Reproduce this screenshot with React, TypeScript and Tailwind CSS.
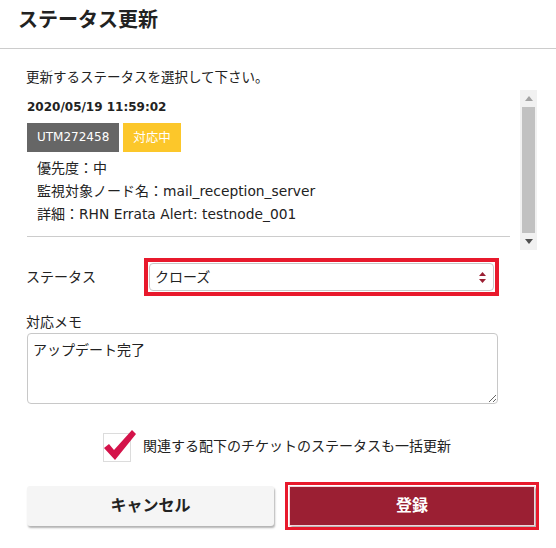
import React from "react";

function Scrollbar() {
  return (
    <div className="w-[17px] h-[160px] bg-[#f1f1f1] flex flex-col items-center shrink-0">
      <div className="h-[17px] w-full flex items-center justify-center">
        <svg width="8" height="5" viewBox="0 0 8 5">
          <polygon points="0,5 8,5 4,0" fill="#a3a3a3" />
        </svg>
      </div>
      <div className="w-[13px] h-[126px] bg-[#c1c1c1]" />
      <div className="h-[17px] w-full flex items-center justify-center">
        <svg width="8" height="5" viewBox="0 0 8 5">
          <polygon points="0,0 8,0 4,5" fill="#505050" />
        </svg>
      </div>
    </div>
  );
}

function CheckIcon() {
  return (
    <svg width="34" height="34" viewBox="0 0 34 34" className="shrink-0">
      <rect x="1.5" y="4.5" width="27" height="28" fill="#fff" stroke="#dcdcdc" strokeWidth="1" />
      <polygon points="2,19 7,15 12,21 30,1 34,5 13,31" fill="#d4134a" />
    </svg>
  );
}

export default function App() {
  return (
    <div className="w-[556px] h-[548px] bg-white text-[#222] overflow-hidden font-[family-name:DejaVu_Sans,Noto_Sans_CJK_JP,sans-serif]">
      <div className="h-[49px] border-b border-[#cccccc] pl-[18px] pt-[6px]">
        <h1 className="text-[20px] font-bold leading-[28px]">ステータス更新</h1>
      </div>
      <div className="pl-[26px] pr-[19px]">
        <p className="pt-[19px] text-[13.5px] leading-[18px]">更新するステータスを選択して下さい。</p>
        <div className="mt-[4px] h-[160px] flex ml-[1px]">
          <div className="flex-1 pt-[8px] pr-[10px] overflow-hidden">
            <div className="text-[12px] font-bold leading-[18px]">2020/05/19 11:59:02</div>
            <div className="mt-[7px] flex gap-[4px]">
              <span className="h-[29px] px-[10px] bg-[#666666] text-white text-[12px] leading-[29px]">UTM272458</span>
              <span className="h-[29px] px-[10px] bg-[#fcc72a] text-white text-[12.5px] leading-[29px]">対応中</span>
            </div>
            <div className="mt-[5px] pl-[10px] text-[14px] leading-[23px]">
              <div>優先度：中</div>
              <div>監視対象ノード名：<span className="text-[13.8px]">mail_reception_server</span></div>
              <div>詳細：<span className="text-[13.8px]">RHN Errata Alert: testnode_001</span></div>
            </div>
            <div className="mt-[10px] border-t border-[#cccccc]" />
          </div>
          <Scrollbar />
        </div>

        <div className="mt-[8px] flex items-center">
          <div className="w-[118px] text-[14px] leading-[20px]">ステータス</div>
          <div className="w-[355px] h-[38px] border-[4px] border-[#e8192c] p-[1px]">
            <div className="h-full border border-[#c8c8c8] rounded-[4px] flex items-center pl-[5px] pr-[7px]">
              <span className="flex-1 text-[14px] leading-[20px]">クローズ</span>
              <svg width="7" height="11" viewBox="0 0 7 11">
                <polygon points="0,4 7,4 3.5,0" fill="#9b1f33" />
                <polygon points="0,7 7,7 3.5,11" fill="#9b1f33" />
              </svg>
            </div>
          </div>
        </div>

        <div className="mt-[16px] text-[14px] leading-[20px]">対応メモ</div>
        <textarea
          readOnly
          defaultValue="アップデート完了"
          className="block mt-[1px] ml-[1px] w-[471px] h-[71px] border border-[#c8c8c8] rounded-[4px] px-[5px] pt-[6px] text-[14px] leading-[20px] outline-none"
        />

        <div className="mt-[25px] flex items-center justify-center pr-[10px]">
          <CheckIcon />
          <span className="ml-[7px] text-[14px] leading-[20px]">関連する配下のチケットのステータスも一括更新</span>
        </div>

        <div className="mt-[23px] ml-[1px] flex gap-[15px]">
          <button className="w-[247px] h-[40px] bg-[#f5f5f5] rounded-[3px] shadow-[1px_2px_2px_rgba(0,0,0,0.3)] text-[16px] font-bold text-[#222]">
            キャンセル
          </button>
          <button className="w-[246px] h-[40px] bg-[#9b1f33] border border-[#f3d6db] shadow-[2px_2px_2px_rgba(0,0,0,0.3)] outline-[3px] outline-solid outline-[#e8192c] outline-offset-[1px] text-[16px] font-bold text-white">
            登録
          </button>
        </div>
      </div>
    </div>
  );
}
